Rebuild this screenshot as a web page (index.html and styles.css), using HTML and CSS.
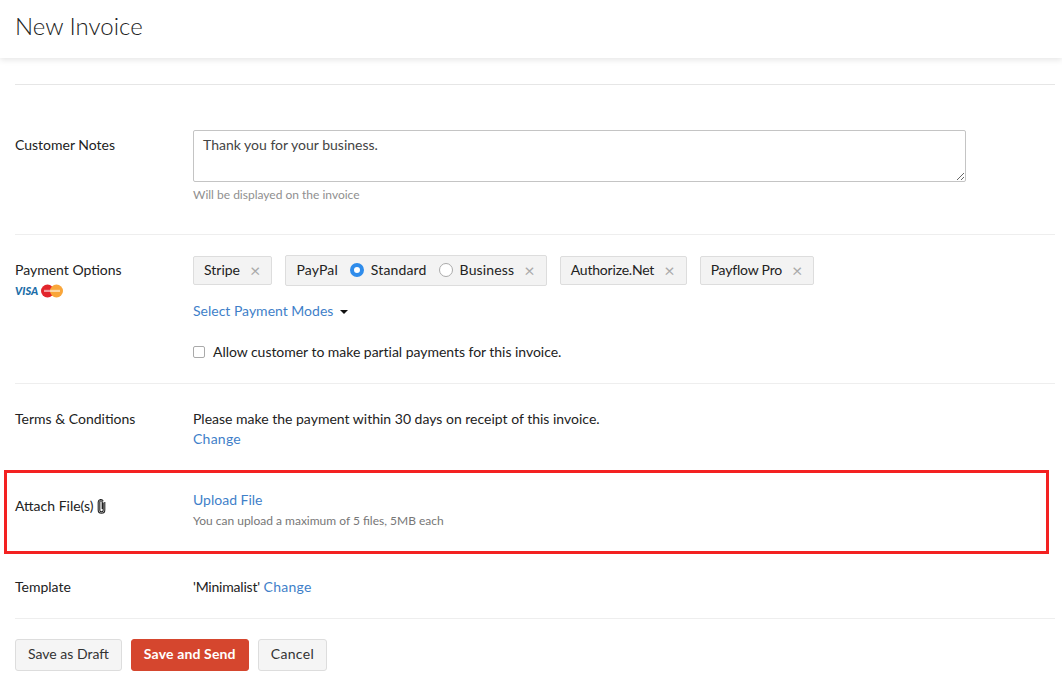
FILE: index.html
```html
<!DOCTYPE html>
<html lang="en">
<head>
<meta charset="utf-8">
<title>New Invoice</title>
<link rel="stylesheet" href="styles.css">
</head>
<body>
<header class="page-header"><h1>New Invoice</h1></header>
<main class="form">
  <section class="row row-notes">
    <div class="label label-top">Customer Notes</div>
    <div class="field">
      <textarea class="notes">Thank you for your business.</textarea>
      <p class="hint hint-notes">Will be displayed on the invoice</p>
    </div>
  </section>
  <section class="row row-payment">
    <div class="label label-top">Payment Options
      <div class="cards">
        <span class="visa">VISA</span>
        <svg class="mc" width="22" height="14" viewBox="0 0 22 14"><circle cx="6.5" cy="7" r="6.5" fill="#e2252c"/><circle cx="15.5" cy="7" r="6.5" fill="#f9a63a"/><rect x="3" y="5.8" width="16" height="2.2" fill="#fff" opacity=".55"/></svg>
      </div>
    </div>
    <div class="field">
      <div class="tags">
        <div class="tag">Stripe<span class="x">×</span></div>
        <div class="tag tag-paypal">PayPal
          <span class="radio radio-on"></span><span class="opt">Standard</span>
          <span class="radio"></span><span class="opt">Business</span>
          <span class="x">×</span></div>
        <div class="tag tag-tight">Authorize.Net<span class="x">×</span></div>
        <div class="tag tag-tight">Payflow Pro<span class="x">×</span></div>
      </div>
      <div class="modes"><a class="link">Select Payment Modes</a><span class="caret"></span></div>
      <div class="partial"><span class="check"></span>Allow customer to make partial payments for this invoice.</div>
    </div>
  </section>
  <section class="row row-terms">
    <div class="label">Terms &amp; Conditions</div>
    <div class="field">
      <div class="terms">Please make the payment within 30 days on receipt of this invoice.</div>
      <a class="link link-wide">Change</a>
    </div>
  </section>
  <section class="row row-attach">
    <div class="highlight"></div>
    <div class="label label-attach">Attach File(s)
      <svg class="clip" width="9" height="15" viewBox="0 0 9 15" fill="none" stroke="#222" stroke-width="1.1"><path d="M6.2 3.6v7.6a1.7 1.7 0 0 1-3.4 0V3a1.2 1.2 0 0 1 2.4 0v7"/><path d="M7.8 3v8a3.3 3.3 0 0 1-6.6 0V3a2.6 2.6 0 0 1 5 -.8"/></svg>
    </div>
    <div class="field">
      <a class="link">Upload File</a>
      <p class="hint hint-attach">You can upload a maximum of 5 files, 5MB each</p>
    </div>
  </section>
  <section class="row row-template">
    <div class="label">Template</div>
    <div class="field"><span class="quoted">'Minimalist'</span> <a class="link link-wide">Change</a></div>
  </section>
  <div class="actions">
    <button class="btn">Save as Draft</button>
    <button class="btn btn-primary">Save and Send</button>
    <button class="btn btn-cancel">Cancel</button>
  </div>
</main>
</body>
</html>
```
FILE: styles.css
```css
* { box-sizing: border-box; }
html, body { margin: 0; height: 687px; overflow: hidden; }
body {
  background: #fff;
  color: #222;
  font-family: Lato, "Open Sans", sans-serif;
  font-size: 14px;
  line-height: 20px;
}
.page-header {
  height: 58px;
  padding: 12px 15px 0;
  box-shadow: 0 2px 6px rgba(0, 0, 0, .1);
}
.page-header h1 {
  margin: 0;
  font-size: 24px;
  font-weight: 300;
  line-height: 28px;
}
.form { margin: 0 7px 0 15px; }
.row {
  display: grid;
  grid-template-columns: 178px 1fr;
  border-bottom: 1px solid #eee;
  position: relative;
}
.row-notes { margin-top: 26px; border-top: 1px solid #e6e6e6; padding: 45px 0 31px; }
.row-payment { padding: 20px 0 21px; }
.row-terms { padding: 25px 0 0; height: 86px; border-bottom: 0; }
.row-attach { height: 107px; padding-top: 20px; border-bottom: 0; }
.row-template { height: 42px; align-items: start; }
.label { color: #222; }
.label-top { padding-top: 5px; }
.label-attach { padding-top: 6px; }
.field { min-width: 0; }
.notes {
  display: block;
  width: 773px;
  height: 52px;
  padding: 4px 9px;
  border: 1px solid #c4c4c4;
  border-radius: 2px;
  color: #444;
  font: inherit;
  margin: 0;
  outline: 0;
}
.hint { margin: 0; color: #777; font-size: 12px; line-height: 16px; }
.hint-notes { color: #8f8f8f; margin-top: 5px; }
.hint-attach { margin-top: 3px; }
.cards { display: flex; align-items: center; gap: 3px; margin-top: 4px; height: 14px; }
.visa { color: #1c6ea8; font-size: 11px; font-weight: 900; font-style: italic; line-height: 14px; }
.clip { vertical-align: -3px; }
.tags { display: flex; align-items: center; gap: 13px; }
.tag {
  display: flex;
  align-items: center;
  height: 29px;
  padding: 0 11px 1px 10px;
  background: #f3f3f3;
  border: 1px solid #ddd;
  border-radius: 2px;
}
.tag-paypal { height: 31px; letter-spacing: .15px; padding-bottom: 2px; }
.tag-tight { letter-spacing: -.2px; }
.x { color: #aaa; font-size: 18px; margin-left: 10px; line-height: 20px; letter-spacing: 0; }
.radio {
  width: 14px; height: 14px;
  border: 1px solid #aaa;
  border-radius: 50%;
  background: #fff;
  margin: 0 7px 0 12px;
}
.radio-on { border: 4.5px solid #2f8ceb; }
.modes { display: flex; align-items: center; margin-top: 15px; }
.link { color: #3f7fc9; }
.link-wide { letter-spacing: .25px; }
.caret {
  margin-left: 7px; margin-top: 2px;
  border: 4px solid transparent;
  border-top-color: #111;
  border-bottom: 0;
}
.partial { display: flex; align-items: center; margin-top: 21px; letter-spacing: -.035px; }
.check {
  width: 12px; height: 12px;
  border: 1px solid #aaa;
  border-radius: 2px;
  margin-right: 8px;
}
.quoted { letter-spacing: -.2px; }
.highlight {
  position: absolute;
  left: -11px; right: 6px; top: 0; height: 84px;
  border: 3px solid #f32121;
}
.actions { display: flex; gap: 9px; margin-top: 20px; }
.btn {
  height: 32px;
  padding: 0 12px 2px;
  background: #f5f5f5;
  border: 1px solid #ddd;
  border-radius: 3px;
  color: #333;
  font: inherit;
}
.btn-primary {
  background: #d5462e;
  border-color: #d5462e;
  color: #fff;
  font-weight: 700;
  letter-spacing: .15px;
}
.btn-cancel { letter-spacing: .35px; }
```
